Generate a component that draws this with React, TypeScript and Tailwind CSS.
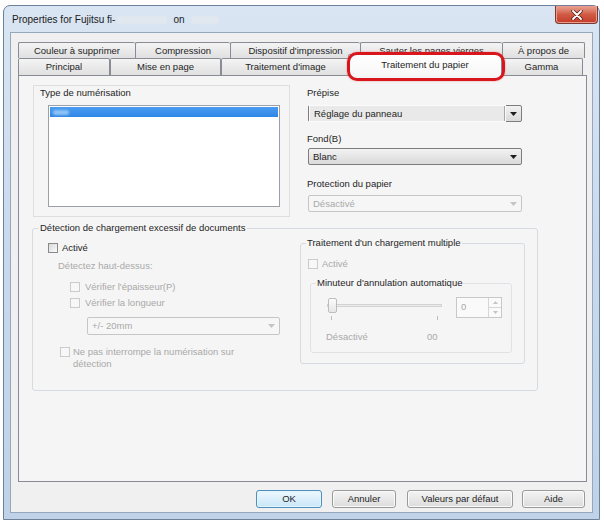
import React from 'react';

/* Boîte de dialogue "Properties for Fujitsu fi-…" — onglet Traitement du papier */

const row1 = [
  { label: 'Couleur à supprimer', w: 'w-[117px]' },
  { label: 'Compression', w: 'w-[95px]' },
  { label: "Dispositif d'impression", w: 'w-[130px]' },
  { label: 'Sauter les pages vierges', w: 'w-[142px]' },
  { label: 'À propos de', w: 'w-[83px]' },
];

const row2 = [
  { label: 'Principal', w: 'w-[92px]' },
  { label: 'Mise en page', w: 'w-[111px]' },
  { label: "Traitement d'image", w: 'w-[129px]' },
  { label: 'Traitement du papier', w: 'w-[152px]', selected: true },
  { label: 'Gamma', w: 'w-[83px]' },
];

function Arrow({ disabled }: { disabled?: boolean }) {
  return (
    <svg width="7" height="4" viewBox="0 0 7 4" className="shrink-0">
      <path d="M0 0h7L3.5 4z" fill={disabled ? '#c4c4c4' : '#1e1e1e'} />
    </svg>
  );
}

function Combo({
  text,
  disabled,
  focus,
  className = '',
}: {
  text: string;
  disabled?: boolean;
  focus?: boolean;
  className?: string;
}) {
  return (
    <div
      className={`flex items-center rounded-[2px] border ${
        disabled
          ? 'border-[#c6c6c6] bg-[#f6f6f6] text-[#a9a9a9]'
          : 'border-[#7d7d7d] bg-gradient-to-b from-[#f2f2f2] to-[#dadada] text-[#1e1e1e]'
      } ${className}`}
    >
      <div
        className={`flex-1 h-full flex items-center pl-[4px] ${
          focus ? 'border-r border-[#a7a7a7] m-[1px] mr-0 bg-[#e9e9e9] outline outline-1 outline-[#fbfbfb]' : ''
        }`}
      >
        {text}
      </div>
      <div className="w-[16px] flex justify-center">
        <Arrow disabled={disabled} />
      </div>
    </div>
  );
}

function Box({ disabled }: { disabled?: boolean }) {
  return (
    <span
      className={`block w-[10px] h-[10px] shrink-0 border ${
        disabled
          ? 'border-[#cbcbcb] bg-[#f7f7f7]'
          : 'border-[#8a8a8a] bg-gradient-to-br from-[#d9d9d9] to-[#fbfbfb]'
      }`}
    />
  );
}

function Check({ label, disabled, gap = 'gap-[4px]', className = '' }: { label: React.ReactNode; disabled?: boolean; gap?: string; className?: string }) {
  return (
    <div className={`flex items-start ${gap} ${disabled ? 'text-[#a9a9a9]' : 'text-[#1e1e1e]'} ${className}`}>
      <span className="mt-[1px]">
        <Box disabled={disabled} />
      </span>
      <span>{label}</span>
    </div>
  );
}

function Btn({ label, w, primary }: { label: string; w: string; primary?: boolean }) {
  return (
    <div
      className={`${w} h-[18px] rounded-[3px] border flex items-center justify-center text-[#1e1e1e] ${
        primary
          ? 'border-[#4f8fbd] bg-gradient-to-b from-[#edf7fd] to-[#c9e7f8] shadow-[inset_0_0_0_1px_#e4f4fc]'
          : 'border-[#9a9a9a] bg-gradient-to-b from-[#f4f4f4] to-[#dcdcdc] shadow-[inset_0_0_0_1px_#fafafa]'
      }`}
    >
      {label}
    </div>
  );
}

function Tab({ label, w, selected }: { label: string; w: string; selected?: boolean }) {
  if (selected) {
    return (
      <div
        className={`${w} relative z-10 -mx-[2px] -mb-px h-[20px] box-content px-[1px] rounded-t-[2px] border border-b-0 border-[#898c95] bg-gradient-to-b from-white to-[#f7f7f7] flex items-center justify-center pb-[1px]`}
      >
        {label}
        {/* cercle rouge d'annotation */}
        <span className="absolute -left-[2px] -right-[4px] -top-[3px] -bottom-[5px] rounded-[10px] border-[3px] border-[#d8161d] shadow-[0_0_2px_#f08a8a]" />
      </div>
    );
  }
  return (
    <div
      className={`${w} h-full rounded-t-[2px] border-l border-t border-[#898c95] last:border-r bg-gradient-to-b from-[#f4f4f4] to-[#e0e0e0] flex items-center justify-center`}
    >
      {label}
    </div>
  );
}

export default function App() {
  return (
    <div className="w-[604px] h-[523px] bg-white pt-[5px] pl-[3px] font-['Liberation_Sans',Arial,sans-serif] text-[9.5px] leading-[12px] text-[#1e1e1e]">
      {/* Fenêtre */}
      <div className="w-[597px] h-[515px] rounded-t-[7px] border border-[#6d819a] bg-gradient-to-b from-[#d9e5f2] via-[#c8d9ed] to-[#bfd2e8] flex flex-col">
        {/* Barre de titre */}
        <div className="h-[26px] flex items-start justify-between">
          <div className="flex items-center pt-[8px] pl-[8px] text-[10px] text-[#1b1b1b]">
            <span>Properties for Fujitsu fi-</span>
            <span className="ml-[2px] w-[50px] h-[8px] rounded-[3px] bg-[#e2e8ef] blur-[1px]" />
            <span className="ml-[6px]">on</span>
            <span className="ml-[6px] w-[28px] h-[8px] rounded-[3px] bg-[#e2e8ef] blur-[1px]" />
          </div>
          <div className="mr-[1px] w-[43px] h-[18px] rounded-b-[4px] border border-t-0 border-[#7b3a31] bg-gradient-to-b from-[#e8a395] via-[#d15a44] to-[#c23b28] shadow-[inset_0_0_0_1px_#eb9c8e] flex items-center justify-center">
            <svg width="12" height="10" viewBox="0 0 12 10">
              <path d="M2 1l8 8M10 1L2 9" stroke="#5a1e18" strokeWidth="3.4" strokeLinecap="round" />
              <path d="M2 1l8 8M10 1L2 9" stroke="#fff" strokeWidth="1.8" strokeLinecap="round" />
            </svg>
          </div>
        </div>

        {/* Zone client */}
        <div className="flex-1 mx-[6px] mb-[6px] border border-[#94a7bd] bg-[#f0f0f0] pt-[9px] pl-[7px] pr-[5px] flex flex-col">
          {/* Onglets */}
          <div className="flex h-[16px] items-stretch">
            {row1.map((t) => (
              <Tab key={t.label} label={t.label} w={t.w} />
            ))}
          </div>
          <div className="flex h-[17px] items-end">
            {row2.map((t) =>
              t.selected ? (
                <Tab key={t.label} label={t.label} w="w-[150px]" selected />
              ) : (
                <div key={t.label} className={`${t.w} h-[17px] flex`}>
                  <Tab label={t.label} w="w-full" />
                </div>
              ),
            )}
          </div>

          {/* Panneau */}
          <div className="h-[407px] border border-[#898c95] bg-[#f5f5f5] pl-[13px] pt-[9px]">
            {/* Partie haute */}
            <div className="flex">
              <div className="ml-[1px] w-[257px] h-[132px] border border-[#dedede] pl-[6px] pt-[1px]">
                <div>Type de numérisation</div>
                <div className="mt-[6px] ml-[8px] w-[232px] h-[102px] border border-[#9ba0a8] bg-white p-[1px]">
                  <div className="h-[10px] bg-gradient-to-b from-[#4a9cf0] to-[#2f86e6] flex items-center pl-[3px]">
                    <span className="w-[16px] h-[5px] rounded-[2px] bg-[#8fc3f6] blur-[1px]" />
                  </div>
                </div>
              </div>

              <div className="ml-[17px] w-[215px] flex flex-col">
                <div className="mt-[2px]">Prépise</div>
                <Combo className="mt-[6px] ml-[1px] h-[17px]" text="Réglage du panneau" focus />
                <div className="mt-[11px]">Fond(B)</div>
                <Combo className="mt-[3px] ml-[1px] h-[17px]" text="Blanc" />
                <div className="mt-[13px]">Protection du papier</div>
                <Combo className="mt-[5px] ml-[1px] h-[17px]" text="Désactivé" disabled />
              </div>
            </div>

            {/* Détection de chargement excessif */}
            <fieldset className="mt-[5px] w-[506px] h-[169px] rounded-[3px] border border-[#d5dbe0]">
              <legend className="ml-[5px] px-[2px]">Détection de chargement excessif de documents</legend>
              <div className="flex">
                <div className="w-[267px] flex flex-col">
                  <Check className="mt-[8px] ml-[15px]" label="Activé" />
                  <div className="mt-[6px] ml-[25px] text-[#a9a9a9]">Détectez haut-dessus:</div>
                  <Check className="mt-[9px] ml-[37px]" gap="gap-[5px]" label="Vérifier l'épaisseur(P)" disabled />
                  <Check className="mt-[4px] ml-[37px]" gap="gap-[5px]" label="Vérifier la longueur" disabled />
                  <Combo className="mt-[8px] ml-[54px] w-[193px] h-[18px]" text="+/- 20mm" disabled />
                  <Check
                    className="mt-[11px] ml-[27px]"
                    gap="gap-[3px]"
                    disabled
                    label={
                      <>
                        Ne pas interrompe la numérisation sur
                        <br />
                        détection
                      </>
                    }
                  />
                </div>

                {/* Traitement d'un chargement multiple */}
                <fieldset className="mt-[3px] w-[225px] h-[127px] rounded-[3px] border border-[#d5dbe0]">
                  <legend className="ml-[5px] px-[1px]">Traitement d'un chargement multiple</legend>
                  <Check className="mt-[9px] ml-[7px]" label="Activé" disabled />
                  <fieldset className="mt-[7px] ml-[9px] w-[202px] h-[76px] rounded-[3px] border border-[#dfe3e6]">
                    <legend className="ml-[5px] px-[1px]">Minuteur d'annulation automatique</legend>
                    <div className="mt-[8px] ml-[16px] flex items-start">
                      <div className="w-[115px] mt-[1px]">
                        <div className="relative h-[16px]">
                          <div className="absolute left-0 right-0 top-[6px] h-[3px] border border-[#d2d2d2] bg-[#ececec]" />
                          <div className="absolute left-[1px] top-0 w-[9px] h-[15px] rounded-[2px] border border-[#bdbdbd] bg-gradient-to-b from-[#fbfbfb] to-[#e6e6e6]" />
                        </div>
                        <div className="mt-[2px] flex justify-between px-[4px]">
                          <span className="w-px h-[4px] bg-[#bdbdbd]" />
                          <span className="w-px h-[4px] bg-[#bdbdbd]" />
                        </div>
                      </div>
                      <div className="ml-[14px] w-[46px] h-[21px] border border-[#c8c8c8] bg-[#fafafa] flex text-[#a9a9a9]">
                        <div className="flex-1 pl-[4px] pt-[3px]">0</div>
                        <div className="w-[13px] flex flex-col border-l border-[#d6d6d6]">
                          <div className="flex-1 flex items-center justify-center border-b border-[#d6d6d6]">
                            <svg width="5" height="3" viewBox="0 0 5 3">
                              <path d="M0 3h5L2.5 0z" fill="#c4c4c4" />
                            </svg>
                          </div>
                          <div className="flex-1 flex items-center justify-center">
                            <svg width="5" height="3" viewBox="0 0 5 3">
                              <path d="M0 0h5L2.5 3z" fill="#c4c4c4" />
                            </svg>
                          </div>
                        </div>
                      </div>
                    </div>
                    <div className="mt-[11px] ml-[15px] flex text-[#a9a9a9]">
                      <span className="w-[101px]">Désactivé</span>
                      <span>00</span>
                    </div>
                  </fieldset>
                </fieldset>
              </div>
            </fieldset>
          </div>

          {/* Boutons */}
          <div className="mt-[8px] pr-[2px] flex justify-end">
            <Btn label="OK" w="w-[66px]" primary />
            <div className="w-[10px]" />
            <Btn label="Annuler" w="w-[64px]" />
            <div className="w-[11px]" />
            <Btn label="Valeurs par défaut" w="w-[106px]" />
            <div className="w-[9px]" />
            <Btn label="Aide" w="w-[63px]" />
          </div>
        </div>
      </div>
    </div>
  );
}
